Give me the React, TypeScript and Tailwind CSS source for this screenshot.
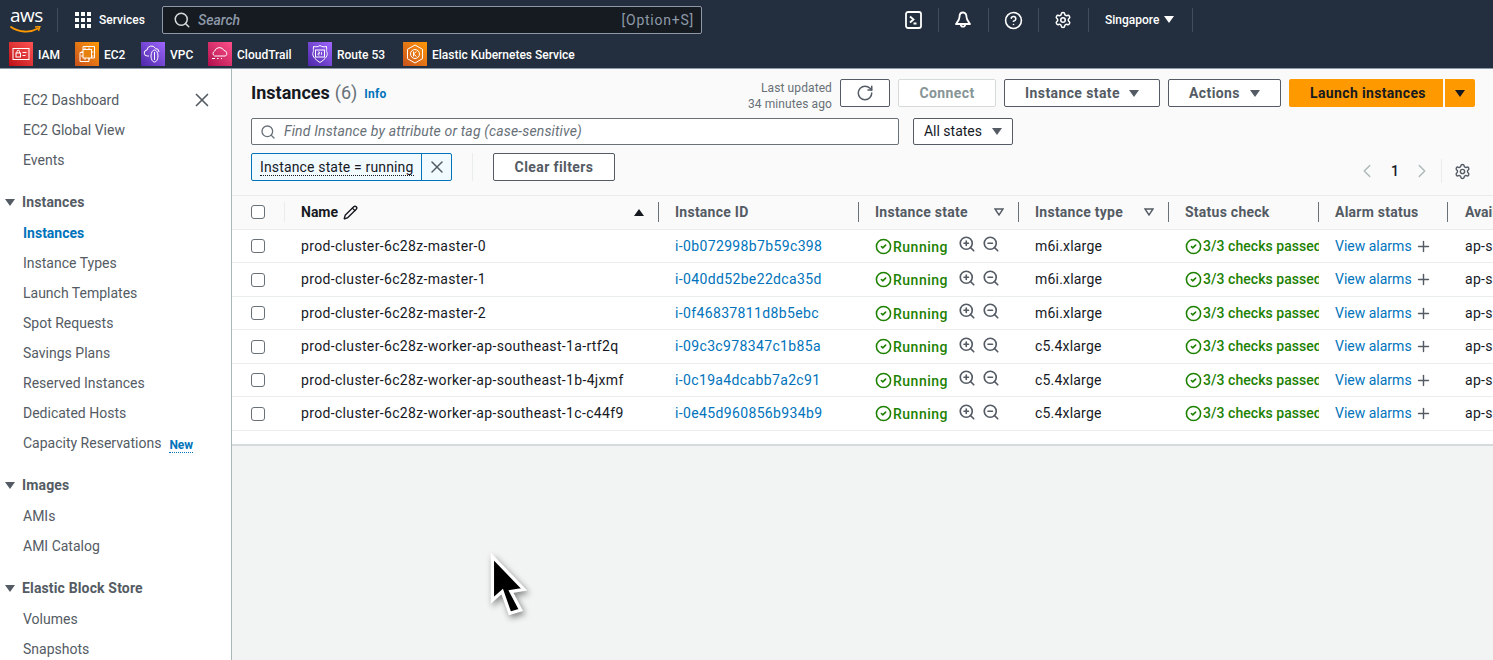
import React from 'react';
import {
  ChevronLeft,
  ChevronRight,
  CircleCheck,
  CircleHelp,
  Pencil,
  Plus,
  RotateCw,
  Search,
  Settings,
  X,
  ZoomIn,
  ZoomOut,
} from 'lucide-react';

const font = 'font-["Roboto","Liberation_Sans",sans-serif]';

const instances = [
  { name: 'prod-cluster-6c28z-master-0', id: 'i-0b072998b7b59c398', type: 'm6i.xlarge' },
  { name: 'prod-cluster-6c28z-master-1', id: 'i-040dd52be22dca35d', type: 'm6i.xlarge' },
  { name: 'prod-cluster-6c28z-master-2', id: 'i-0f46837811d8b5ebc', type: 'm6i.xlarge' },
  { name: 'prod-cluster-6c28z-worker-ap-southeast-1a-rtf2q', id: 'i-09c3c978347c1b85a', type: 'c5.4xlarge' },
  { name: 'prod-cluster-6c28z-worker-ap-southeast-1b-4jxmf', id: 'i-0c19a4dcabb7a2c91', type: 'c5.4xlarge' },
  { name: 'prod-cluster-6c28z-worker-ap-southeast-1c-c44f9', id: 'i-0e45d960856b934b9', type: 'c5.4xlarge' },
];

const rowGrid = 'grid grid-cols-[53px_374px_200px_160px_150px_150px_129px_100px]';

// little solid triangle used on every dropdown
const Caret: React.FC<{ className?: string; up?: boolean }> = ({ className = '', up }) => (
  <svg width="10" height="7" viewBox="0 0 10 7" className={`shrink-0 ${className}`}>
    <polygon points={up ? '5,0 10,7 0,7' : '0,0 10,0 5,7'} fill="currentColor" />
  </svg>
);

const Tile: React.FC<{ bg: string; children: React.ReactNode }> = ({ bg, children }) => (
  <span className={`flex h-6 w-6 shrink-0 items-center justify-center ${bg}`}>
    <svg width="20" height="20" viewBox="0 0 20 20" fill="none" stroke="white" strokeWidth="1">
      {children}
    </svg>
  </span>
);

const shortcuts = [
  {
    label: 'IAM',
    width: 'w-[21px]',
    bg: 'bg-linear-to-tr from-[#bd0816] to-[#ff5252]',
    icon: (
      <>
        <rect x="2" y="4.5" width="16" height="11" />
        <rect x="5" y="9" width="4.5" height="4" />
        <path d="M6 9V7.5a1.2 1.2 0 0 1 2.5 0V9M11.5 8.5h4M11.5 11.5h3" />
      </>
    ),
  },
  {
    label: 'EC2',
    width: 'w-[21px]',
    bg: 'bg-linear-to-tr from-[#c8511b] to-[#ff9900]',
    icon: (
      <>
        <path d="M6 5V2.5h11.5V14H15M3 8.5h9V17.5H3z" />
        <rect x="6" y="5.500" width="8.500" height="8.500" fill="#e8820f" />
        <path d="M8 3.500v2M12 3.500v2M8 14v2M12 14v2M4 8h2M4 12h2M14.500 8h2M14.500 12h2" />
      </>
    ),
  },
  {
    label: 'VPC',
    width: 'w-[22px]',
    bg: 'bg-linear-to-tr from-[#4d27a8] to-[#a166ff]',
    icon: (
      <>
        <path d="M6 12H4.500a3 3 0 0 1-.5-6 4.500 4.500 0 0 1 8.500-1.500A3.500 3.500 0 0 1 16 8" />
        <ellipse cx="11.500" cy="12" rx="3.500" ry="6" />
        <path d="M11.500 8v8" />
      </>
    ),
  },
  {
    label: 'CloudTrail',
    width: 'w-[55px]',
    bg: 'bg-linear-to-tr from-[#b0084d] to-[#ff4f8b]',
    icon: (
      <>
        <path d="M4.500 12a2.800 2.800 0 0 1 .2-5A5 5 0 0 1 14 6.500a3 3 0 0 1 1.500 5.500z" />
        <path d="M2 14.500h3M7 14.500h1.500M11 14.500h1" />
      </>
    ),
  },
  {
    label: 'Route 53',
    width: 'w-[50px]',
    bg: 'bg-linear-to-tr from-[#4d27a8] to-[#a166ff]',
    icon: (
      <>
        <path d="M10 1.500c2 1.500 4 1.500 6.500 1 .5 5-.5 3 .5 6s-1 6-7 10c-6-4-8-7-7-10s0-1 .5-6c2.500.5 4.500.5 6.500-1z" />
        <rect x="5.500" y="6" width="9" height="7" />
        <path d="M8 8h1.500v1.500H8V11h1.500M11.500 8v3" strokeWidth="0.8" />
      </>
    ),
  },
  {
    label: 'Elastic Kubernetes Service',
    width: 'w-[142px]',
    bg: 'bg-linear-to-tr from-[#c8511b] to-[#ff9900]',
    icon: (
      <>
        <path d="M10 1l7.500 4.300v9.400L10 19l-7.500-4.300V5.300z" />
        <circle cx="10" cy="10" r="4.500" />
        <path d="M8.500 7.500v5M11.500 7.500L8.500 10l3 2.500" />
      </>
    ),
  },
];

const NavCell: React.FC<{ children: React.ReactNode }> = ({ children }) => (
  <span className="flex h-full w-[50px] items-center justify-center border-r border-[#414d5c]">{children}</span>
);

const TopNav: React.FC = () => (
  <header className="h-[69px] shrink-0 border-b border-[#8d99a8] bg-[#232f3e] text-white">
    <div className="flex h-[40px] items-center">
      <div className="relative ml-[10px] h-[30px] w-[30px]">
        <span className='absolute -top-[2px] left-0 font-["Open_Sans",sans-serif] text-[19px] leading-[24px] tracking-[-0.5px]'>
          aws
        </span>
        <svg width="31" height="8" viewBox="0 0 31 8" className="absolute left-0 top-[21px]" fill="none">
          <path d="M1 1c8 5.500 19 6 27 1.500" stroke="#ff9900" strokeWidth="1.800" strokeLinecap="round" />
          <path d="M25 1l5-.5-1.500 4.500" stroke="#ff9900" strokeWidth="1.300" />
        </svg>
      </div>
      <span className="ml-[17px] h-[24px] w-px bg-[#414d5c]" />
      <div className="ml-[17px] grid grid-cols-3 gap-[2px]">
        {Array.from({ length: 9 }).map((_, i) => (
          <span key={i} className="h-[4px] w-[4px] bg-white" />
        ))}
      </div>
      <span className="ml-[8px] text-[12px] font-medium">Services</span>
      <div className="ml-[17px] flex h-[28px] w-[540px] items-center rounded-[2px] border border-[#8d99a8] bg-[#161b22] pl-[10px] pr-[7px]">
        <Search size={18} strokeWidth={2} className="text-[#d5dbdb]" />
        <span className="ml-[7px] text-[14px] font-medium italic text-[#8d99a8]">Search</span>
        <span className="ml-auto text-[14px] tracking-[0.75px] text-[#8d99a8]">[Option+S]</span>
      </div>
      <div className="ml-[187px] flex h-[24px] items-center">
        <NavCell>
          <svg width="17" height="18" viewBox="0 0 17 18" fill="none" stroke="white" strokeWidth="1.800">
            <rect x="1" y="1" width="15" height="16" rx="2" />
            <path d="M5 5.500l3.500 3-3.500 3M8.500 12.500h3" />
          </svg>
        </NavCell>
        <NavCell>
          <svg width="18" height="18" viewBox="0 0 18 18" fill="none" stroke="white" strokeWidth="1.800" strokeLinejoin="round">
            <path d="M9 1.500c-2.500 0-3.500 2-3.500 4.500 0 3-2 5-3.500 7h14c-1.500-2-3.500-4-3.500-7 0-2.500-1-4.500-3.500-4.500z" />
            <path d="M6.800 13.500a2.200 2.200 0 0 0 4.400 0" />
          </svg>
        </NavCell>
        <NavCell>
          <CircleHelp size={19} strokeWidth={2} />
        </NavCell>
        <NavCell>
          <Settings size={18} strokeWidth={2} />
        </NavCell>
        <span className="flex h-full w-[104px] items-center border-r border-[#414d5c] pl-[16px] text-[12px] font-medium">
          Singapore
          <Caret className="ml-[5px] -translate-y-px" />
        </span>
      </div>
    </div>
    <div className="flex h-[28px] items-center gap-[16px] pl-[9px]">
      {shortcuts.map((s) => (
        <div key={s.label} className="flex items-center gap-[5px]">
          <Tile bg={s.bg}>{s.icon}</Tile>
          <span className={`translate-y-px whitespace-nowrap text-[12px] font-medium ${s.width}`}>{s.label}</span>
        </div>
      ))}
    </div>
  </header>
);

const NavItem: React.FC<{ children: React.ReactNode; active?: boolean }> = ({ children, active }) => (
  <div
    className={`flex h-[30px] items-center pl-[23px] text-[14px] ${
      active ? 'font-bold text-[#0073bb]' : 'text-[#545b64]'
    }`}
  >
    {children}
  </div>
);

const NavGroup: React.FC<{ title: string }> = ({ title }) => (
  <div className="mt-[12px] flex h-[31px] items-center pl-[5px] text-[14px] font-bold tracking-[0.15px] text-[#545b64]">
    <Caret className="mr-[7px]" />
    {title}
  </div>
);

const Sidebar: React.FC = () => (
  <aside className="relative w-[232px] shrink-0 border-r border-[#aab7b8] bg-white pt-[16px]">
    <X size={22} strokeWidth={1.800} className="absolute left-[191px] top-[20px] text-[#545b64]" />
    <NavItem>EC2 Dashboard</NavItem>
    <NavItem>EC2 Global View</NavItem>
    <NavItem>Events</NavItem>
    <NavGroup title="Instances" />
    <NavItem active>Instances</NavItem>
    <NavItem>Instance Types</NavItem>
    <NavItem>Launch Templates</NavItem>
    <NavItem>Spot Requests</NavItem>
    <NavItem>Savings Plans</NavItem>
    <NavItem>Reserved Instances</NavItem>
    <NavItem>Dedicated Hosts</NavItem>
    <NavItem>
      Capacity Reservations
      <span className="ml-[8px] translate-y-[2px] border-b border-dotted border-[#0073bb] text-[12px] font-bold leading-[14px] text-[#0073bb]">
        New
      </span>
    </NavItem>
    <NavGroup title="Images" />
    <NavItem>AMIs</NavItem>
    <NavItem>AMI Catalog</NavItem>
    <NavGroup title="Elastic Block Store" />
    <NavItem>Volumes</NavItem>
    <NavItem>Snapshots</NavItem>
  </aside>
);

const Button: React.FC<{ className?: string; children: React.ReactNode }> = ({ className = '', children }) => (
  <div
    className={`flex h-[28px] items-center justify-center rounded-[2px] border border-[#545b64] bg-white text-[14px] font-bold tracking-[0.4px] text-[#545b64] ${className}`}
  >
    {children}
  </div>
);

const Toolbar: React.FC = () => (
  <div className="h-[127px] border-b border-[#eaeded] bg-[#fafafa] pl-[19px] pr-[18px] pt-[10px]">
    <div className="flex h-[28px] items-center">
      <h1 className="text-[18px] font-bold leading-[28px] text-[#16191f]">Instances</h1>
      <span className="ml-[5px] text-[18px] leading-[28px] text-[#687078]">(6)</span>
      <span className="ml-[7px] translate-y-px text-[12px] font-bold tracking-[0.2px] text-[#0073bb]">Info</span>
      <div className="ml-auto mr-[8px] mt-[6px] text-right text-[12px] leading-[16px] tracking-[0.1px] text-[#687078]">
        Last updated
        <br />
        34 minutes ago
      </div>
      <Button className="w-[50px]">
        <RotateCw size={18} strokeWidth={2} />
      </Button>
      <Button className="ml-[8px] w-[98px] border-[#d5dbdb] text-[#879596]">Connect</Button>
      <Button className="ml-[8px] w-[156px] gap-[9px]">
        Instance state <Caret />
      </Button>
      <Button className="ml-[8px] w-[113px] gap-[10px]">
        Actions <Caret />
      </Button>
      <div className="ml-[8px] flex h-[28px] w-[154px] items-center justify-center rounded-l-[2px] bg-[#ff9900] pl-[4px] text-[14px] font-bold tracking-[0.35px] text-[#16191f]">
        Launch instances
      </div>
      <div className="ml-[2px] flex h-[28px] w-[30px] items-center justify-center rounded-r-[2px] bg-[#ff9900] text-[#16191f]">
        <Caret />
      </div>
    </div>
    <div className="mt-[11px] flex h-[27px] items-center gap-[14px]">
      <div className="flex h-full w-[648px] items-center rounded-[2px] border border-[#687078] bg-white pl-[8px]">
        <Search size={16} strokeWidth={2} className="text-[#687078]" />
        <span className="ml-[8px] text-[14px] italic tracking-[0.15px] text-[#687078]">
          Find Instance by attribute or tag (case-sensitive)
        </span>
      </div>
      <div className="flex h-full w-[100px] items-center justify-center gap-[10px] rounded-[2px] border border-[#545b64] bg-white text-[14px] text-[#16191f]">
        All states <Caret className="text-[#545b64]" />
      </div>
    </div>
    <div className="mt-[8px] flex h-[28px] items-center">
      <div className="flex h-full w-[201px] items-center rounded-[2px] border border-[#0073bb] bg-[#f1faff] text-[14px] tracking-[0.15px] text-[#16191f]">
        <span className="ml-[8px] border-b border-dotted border-[#16191f] leading-[16px]">Instance state = running</span>
        <span className="ml-auto flex h-full w-[30px] items-center justify-center border-l border-[#0073bb] text-[#545b64]">
          <X size={20} strokeWidth={1.800} />
        </span>
      </div>
      <span className="ml-[20px] h-full w-px bg-[#eaeded]" />
      <Button className="ml-[20px] w-[122px]">Clear filters</Button>
      <div className="ml-auto mr-[4px] mt-[8px] flex h-[24px] items-center text-[14px] font-medium text-[#16191f]">
        <ChevronLeft size={22} strokeWidth={1.500} className="text-[#aab7b8]" />
        <span className="ml-[13px] w-[8px] text-center">1</span>
        <ChevronRight size={22} strokeWidth={1.500} className="ml-[12px] text-[#aab7b8]" />
        <span className="ml-[8px] h-full w-px bg-[#eaeded]" />
        <Settings size={17} strokeWidth={2} className="ml-[12px] text-[#545b64]" />
      </div>
    </div>
  </div>
);

const FilterMark: React.FC = () => (
  <svg width="10" height="8" viewBox="0 0 10 8" fill="none" stroke="#545b64" strokeWidth="1.400" className="shrink-0">
    <polygon points="1,1 9,1 5,7" />
  </svg>
);

const HeadCell: React.FC<{ label: string; filter?: boolean }> = ({ label, filter }) => (
  <div className="flex h-[20px] items-center border-r border-[#687078] pl-[16px] pr-[14px] text-[14px] font-bold tracking-[0.25px] text-[#545b64]">
    {label}
    {filter && (
      <span className="ml-auto">
        <FilterMark />
      </span>
    )}
  </div>
);

const Checkbox: React.FC = () => (
  <span className="ml-[19px] block h-[14px] w-[14px] rounded-[3px] border border-[#687078] bg-white" />
);

const InstanceRow: React.FC<{ item: (typeof instances)[number] }> = ({ item }) => (
  <div className={`${rowGrid} h-[33.5px] items-center border-b border-[#eaeded] bg-white pt-px text-[14px] text-[#16191f]`}>
    <Checkbox />
    <div className="pl-[16px] tracking-[0.34px]">{item.name}</div>
    <div className="pl-[16px] tracking-[0.36px] text-[#0073bb]">{item.id}</div>
    <div className="flex items-center pl-[16px]">
      <span className="flex items-center gap-[1px] font-medium tracking-[0.5px] text-[#1d8102]">
        <CircleCheck size={17} strokeWidth={2.200} />
        <span className="translate-y-px">Running</span>
      </span>
      <ZoomIn size={18} strokeWidth={2.200} className="ml-[10px] -translate-y-[2px] text-[#545b64]" />
      <ZoomOut size={18} strokeWidth={2.200} className="ml-[6px] -translate-y-[2px] text-[#545b64]" />
    </div>
    <div className="pl-[16px] tracking-[0.2px]">{item.type}</div>
    <div className="flex items-center gap-[1px] overflow-hidden whitespace-nowrap pl-[16px] font-medium tracking-[0.05px] text-[#1d8102]">
      <CircleCheck size={17} strokeWidth={2.200} className="shrink-0" />
      3/3 checks passed
    </div>
    <div className="flex items-center pl-[16px] text-[#0073bb]">
      View alarms
      <Plus size={17} strokeWidth={2} className="ml-[3px] text-[#545b64]" />
    </div>
    <div className="whitespace-nowrap pl-[17px] tracking-[0.3px]">ap-southeast-1a</div>
  </div>
);

const InstancesTable: React.FC = () => (
  <div className="overflow-hidden">
    <div className={`${rowGrid} h-[33.5px] items-center border-b border-[#eaeded] bg-[#fafafa]`}>
      <div className="flex h-[20px] items-center border-r border-[#eaeded]">
        <Checkbox />
      </div>
      <div className="flex h-[20px] items-center border-r border-[#687078] pl-[16px] pr-[14px] text-[14px] font-bold text-[#16191f]">
        Name
        <Pencil size={15} strokeWidth={2.200} className="ml-[5px]" />
        <Caret up className="ml-auto" />
      </div>
      <HeadCell label="Instance ID" />
      <HeadCell label="Instance state" filter />
      <HeadCell label="Instance type" filter />
      <HeadCell label="Status check" />
      <HeadCell label="Alarm status" />
      <div className="whitespace-nowrap pl-[17px] text-[14px] font-bold text-[#545b64]">Availability Zone</div>
    </div>
    {instances.map((item) => (
      <InstanceRow key={item.id} item={item} />
    ))}
  </div>
);

const App: React.FC = () => (
  <div className={`relative flex h-[660px] w-[1493px] flex-col overflow-hidden ${font}`}>
    <TopNav />
    <div className="flex min-h-0 flex-1">
      <Sidebar />
      <main className="flex min-w-0 flex-1 flex-col bg-[#f2f3f3]">
        <div className="border-b-2 border-[#d5dbdb] bg-white pb-[13.5px]">
          <Toolbar />
          <InstancesTable />
        </div>
      </main>
    </div>
    {/* mouse pointer caught in the capture */}
    <svg
      width="48"
      height="74"
      viewBox="0 0 44 68"
      className="absolute left-[488px] top-[548px] drop-shadow-[2px_3px_3px_rgba(0,0,0,0.45)]"
    >
      <polygon points="4,8 33,38 21,40 30,57 20,60 13,40 4,48" fill="black" stroke="white" strokeWidth="3" />
    </svg>
  </div>
);

export default App;
